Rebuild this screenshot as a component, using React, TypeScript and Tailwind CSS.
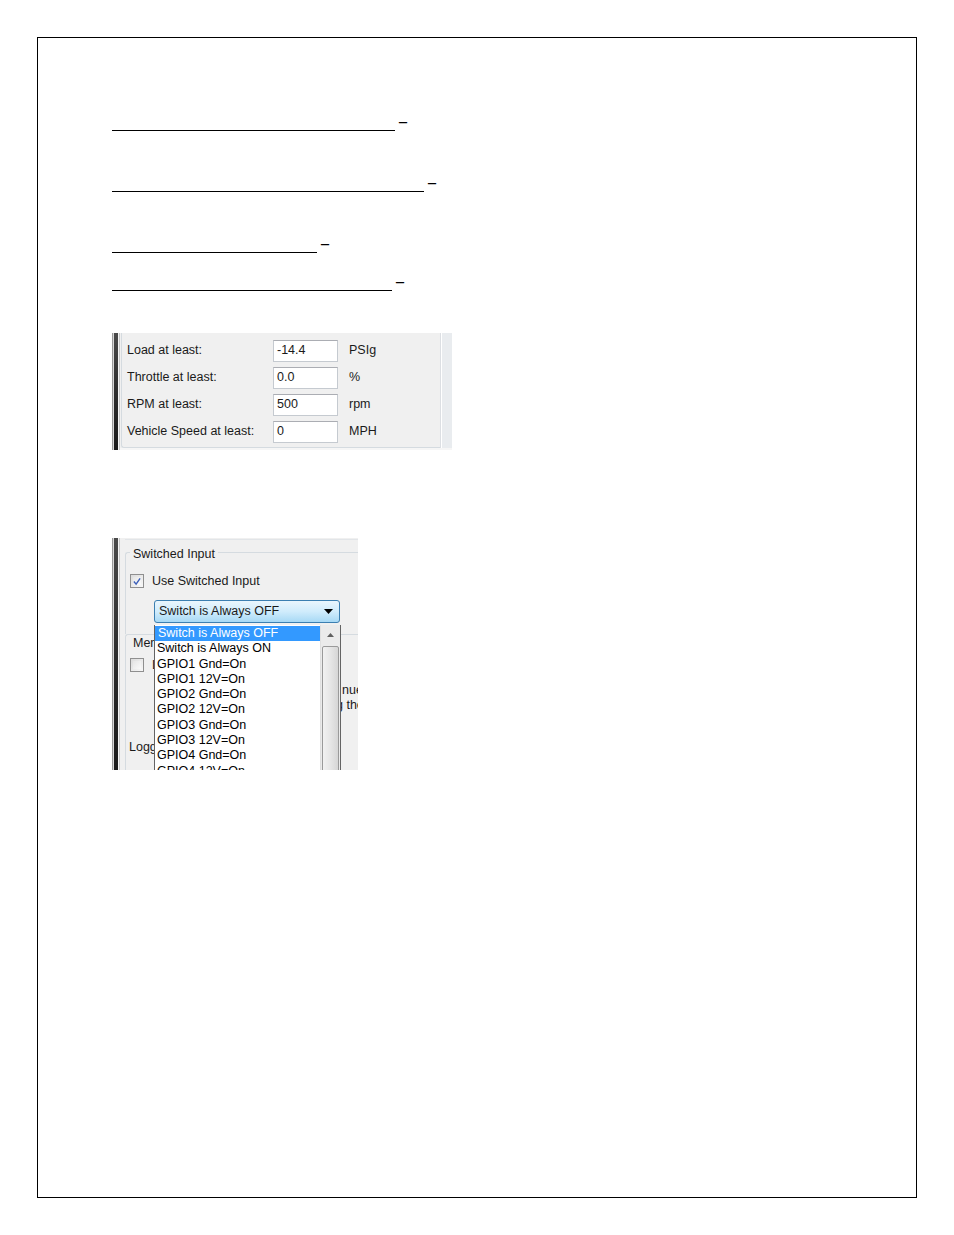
import React from "react";

const ui = "font-['Liberation_Sans',Arial,sans-serif]";

function BlankLine({ width, mt }: { width: number; mt: number }) {
  return (
    <div className="flex items-end h-[16px]" style={{ marginTop: mt }}>
      <span className="block h-0 border-b border-black" style={{ width }} />
      <span className="ml-[4px] mb-[1px] font-['Liberation_Serif',serif] font-bold text-[16px] leading-[16px] text-black">–</span>
    </div>
  );
}

function DarkEdge() {
  return (
    <div className="flex shrink-0 self-stretch">
      <div className="w-px bg-[#9a9a9a]" />
      <div className="w-px bg-[#d8d8d8]" />
      <div className="w-[4px] bg-gradient-to-b from-[#4a4a4a] via-[#2e2e2e] to-[#1a1a1a]" />
      <div className="w-px bg-[#f4f4f4]" />
      <div className="w-px bg-[#c9c9c9]" />
    </div>
  );
}

const rows = [
  { label: "Load at least:", value: "-14.4", unit: "PSIg" },
  { label: "Throttle at least:", value: "0.0", unit: "%" },
  { label: "RPM at least:", value: "500", unit: "rpm" },
  { label: "Vehicle Speed at least:", value: "0", unit: "MPH" },
];

function Thresholds() {
  return (
    <div className={`flex w-[340px] h-[117px] bg-[#f0f0f0] mt-[42px] ${ui}`}>
      <DarkEdge />
      <div className="flex-1 flex flex-col">
        <div className="flex h-[115px]">
          <div className="flex-1 ml-px border-l border-b border-[#d5dbe0] rounded-bl-[3px] pt-[4px] pl-[5px]">
            {rows.map((r) => (
              <div key={r.label} className="flex items-center h-[27px] text-[12.5px] text-[#1a1a1a]">
                <span className="w-[146px] whitespace-nowrap">{r.label}</span>
                <div className="w-[65px] h-[22px] bg-white border border-[#c5cad0] border-t-[#abadb3] flex items-center pl-[3px]">
                  {r.value}
                </div>
                <span className="ml-[11px]">{r.unit}</span>
              </div>
            ))}
          </div>
          <div className="w-px bg-[#dcdfe3]" />
          <div className="w-px bg-white" />
          <div className="w-[10px] bg-[#e9ecef]" />
        </div>
        <div className="flex-1 bg-[#f6f6f6]" />
      </div>
    </div>
  );
}

const options = [
  "Switch is Always OFF",
  "Switch is Always ON",
  "GPIO1 Gnd=On",
  "GPIO1 12V=On",
  "GPIO2 Gnd=On",
  "GPIO2 12V=On",
  "GPIO3 Gnd=On",
  "GPIO3 12V=On",
  "GPIO4 Gnd=On",
  "GPIO4 12V=On",
];

function Check({ checked }: { checked?: boolean }) {
  return (
    <div className="w-[14px] h-[14px] shrink-0 border border-[#8f8f8f] bg-gradient-to-br from-[#dcdcdc] to-[#f8f8f8] p-[2px]">
      <div className="w-full h-full bg-gradient-to-br from-[#e6e6e6] to-[#fafafa] flex items-center justify-center">
        {checked && (
          <svg width="9" height="9" viewBox="0 0 9 9">
            <path d="M1 4.5 L3.5 7.5 L8 1" fill="none" stroke="#3c5fb8" strokeWidth="1.6" />
          </svg>
        )}
      </div>
    </div>
  );
}

function SwitchedInput() {
  return (
    <div className={`relative flex w-[246px] h-[232px] bg-[#f0f0f0] mt-[88px] overflow-hidden ${ui} text-[12.5px] text-[#1a1a1a]`}>
      <DarkEdge />
      <div className="flex-1 flex flex-col">
        <div className="h-px mt-px bg-[#e2e5e8] ml-[5px] shrink-0" />
        {/* group: Switched Input */}
        <div className="ml-[5px] mt-[12px] border-l border-t border-[#d5dbe0] rounded-tl-[3px] h-[82px] shrink-0 relative">
          <span className="absolute left-[4px] top-[-6px] bg-[#f0f0f0] px-[3px] leading-[15px]">Switched Input</span>
          <div className="flex items-center h-[14px] mt-[21px] ml-[4px]">
            <Check checked />
            <span className="ml-[8px] whitespace-nowrap">Use Switched Input</span>
          </div>
          <div className="ml-[28px] mt-[12px] w-[186px] h-[23px] rounded-[3px] border border-[#3c7fb1] bg-gradient-to-b from-[#eaf6fd] via-[#d0ecfc] to-[#a7d9f5] flex items-center pl-[4px] pr-[6px]">
            <span className="flex-1 whitespace-nowrap">Switch is Always OFF</span>
            <svg width="9" height="5" viewBox="0 0 9 5">
              <path d="M0 0 H9 L4.5 5 Z" fill="#000" />
            </svg>
          </div>
        </div>
        {/* group: Memory, behind the list */}
        <div className="ml-[5px] border-l border-t border-[#d5dbe0] rounded-tl-[3px] flex-1 min-h-0 relative">
          <span className="absolute left-[4px] top-[1px] pl-[3px] leading-[15px] whitespace-nowrap">Memory</span>
          <div className="flex items-center h-[14px] mt-[23px] ml-[4px]">
            <Check />
            <span className="ml-[8px]">Log</span>
          </div>
          <div className="ml-[210px] mt-[11px] leading-[15px] whitespace-nowrap">
            <div className="pl-[6px]">nue</div>
            <div>g the</div>
          </div>
          <div className="ml-[3px] mt-[27px] leading-[15px] whitespace-nowrap">Logging</div>
        </div>
      </div>

      {/* opened list */}
      <div className="absolute left-[42px] top-[87px] w-[187px] h-[160px] bg-white border-l border-r border-[#646464] flex">
        <div className="flex-1 text-[12.5px] leading-[15.3px] pt-[1px]">
          {options.map((o, i) => (
            <div key={o} className={i === 0 ? "bg-[#3399ff] text-white pl-[3px] whitespace-nowrap" : "pl-[2px] text-black whitespace-nowrap"}>
              {o}
            </div>
          ))}
        </div>
        <div className="w-[20px] bg-[#ebebeb] border-l border-[#e0e0e0] flex flex-col items-center">
          <div className="h-[19px] w-full flex items-center justify-center pt-[1px]">
            <svg width="7" height="4" viewBox="0 0 7 4">
              <path d="M0 4 L3.5 0 L7 4 Z" fill="#606060" />
            </svg>
          </div>
          <div className="w-[17px] flex-1 mt-[2px] rounded-[2px] border border-[#9a9a9a] bg-gradient-to-r from-[#f2f2f2] via-[#e6e6e6] to-[#d6d6d6]" />
        </div>
      </div>
    </div>
  );
}

export default function App() {
  return (
    <div className="w-[954px] h-[1235px] bg-white pt-[37px] pl-[37px]">
      <div className="w-[880px] h-[1161px] border border-black pl-[74px] flex flex-col">
        <BlankLine width={283} mt={77} />
        <BlankLine width={312} mt={45} />
        <BlankLine width={205} mt={45} />
        <BlankLine width={280} mt={22} />
        <Thresholds />
        <SwitchedInput />
      </div>
    </div>
  );
}
